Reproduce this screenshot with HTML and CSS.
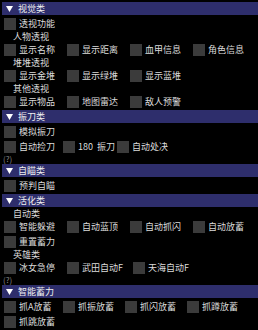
FILE: index.html
```html
<!DOCTYPE html>
<html lang="zh">
<head>
  <meta charset="UTF-8" />
  <meta name="viewport" content="width=device-width, initial-scale=1.0"/>
  <title>菜单</title>
  <link rel="stylesheet" href="styles.css">
</head>
<body>

  <div class="menu">
    <div class="hdr"><svg class="arrow" width="7" height="6" viewBox="0 0 7 6"><path d="M0 0H7L3.5 6Z" fill="#fff"/></svg>视觉类</div>
    <div class="row"><div class="item"><span class="box"></span>透视功能</div></div>
    <div class="sub">人物透视</div>
    <div class="row">
      <div class="item"><span class="box"></span>显示名称</div>
      <div class="item"><span class="box"></span>显示距离</div>
      <div class="item"><span class="box"></span>血甲信息</div>
      <div class="item"><span class="box"></span>角色信息</div>
    </div>
    <div class="sub">堆堆透视</div>
    <div class="row">
      <div class="item"><span class="box"></span>显示金堆</div>
      <div class="item"><span class="box"></span>显示绿堆</div>
      <div class="item"><span class="box"></span>显示蓝堆</div>
    </div>
    <div class="sub">其他透视</div>
    <div class="row">
      <div class="item"><span class="box"></span>显示物品</div>
      <div class="item"><span class="box"></span>地图雷达</div>
      <div class="item"><span class="box"></span>敌人预警</div>
    </div>

    <div class="hdr"><svg class="arrow" width="7" height="6" viewBox="0 0 7 6"><path d="M0 0H7L3.5 6Z" fill="#fff"/></svg>振刀类</div>
    <div class="row"><div class="item"><span class="box"></span>模拟振刀</div></div>
    <div class="row">
      <div class="item w59"><span class="box"></span>自动捡刀</div>
      <div class="item w54"><span class="box"></span>180&nbsp; 振刀</div>
      <div class="item"><span class="box"></span>自动处决</div>
    </div>
    <div class="help">(?)</div>

    <div class="hdr"><svg class="arrow" width="7" height="6" viewBox="0 0 7 6"><path d="M0 0H7L3.5 6Z" fill="#fff"/></svg>自瞄类</div>
    <div class="row"><div class="item"><span class="box"></span>预判自瞄</div></div>

    <div class="hdr"><svg class="arrow" width="7" height="6" viewBox="0 0 7 6"><path d="M0 0H7L3.5 6Z" fill="#fff"/></svg>活化类</div>
    <div class="sub">自动类</div>
    <div class="row">
      <div class="item"><span class="box"></span>智能躲避</div>
      <div class="item"><span class="box"></span>自动蓝顶</div>
      <div class="item"><span class="box"></span>自动抓闪</div>
      <div class="item"><span class="box"></span>自动放蓄</div>
    </div>
    <div class="row"><div class="item"><span class="box"></span>重置蓄力</div></div>
    <div class="sub">英雄类</div>
    <div class="row">
      <div class="item"><span class="box"></span>冰女急停</div>
      <div class="item w66"><span class="box"></span>武田自动F</div>
      <div class="item"><span class="box"></span>天海自动F</div>
    </div>
    <div class="help">(?)</div>

    <div class="hdr"><svg class="arrow" width="7" height="6" viewBox="0 0 7 6"><path d="M0 0H7L3.5 6Z" fill="#fff"/></svg>智能蓄力</div>
    <div class="row">
      <div class="item w59"><span class="box"></span>抓A放蓄</div>
      <div class="item w62"><span class="box"></span>抓振放蓄</div>
      <div class="item w62"><span class="box"></span>抓闪放蓄</div>
      <div class="item"><span class="box"></span>抓蹲放蓄</div>
    </div>
    <div class="row"><div class="item"><span class="box"></span>抓跳放蓄</div></div>
  </div>

</body>
</html>
```

FILE: styles.css
```css
body {
  margin: 0;
  background: #000;
  font-family: "Noto Sans CJK SC", "Noto Sans", sans-serif;
  font-size: 9px;
  color: #dcdcdc;
  overflow: hidden;
}

.menu {
  padding-top: 2px;
}

.hdr {
  height: 13px;
  margin: 0 0 2px 2px;
  padding-left: 4px;
  background: #2e2e6c;
  color: #f0f0f0;
  display: flex;
  align-items: center;
  line-height: 13px;
}

.arrow {
  margin-right: 5px;
}

.row {
  height: 13px;
  margin-bottom: 2px;
  padding-left: 4px;
  display: flex;
  align-items: center;
}

.item {
  width: 63px;
  flex: none;
  display: flex;
  align-items: center;
  white-space: nowrap;
  line-height: 13px;
}

.w54 { width: 54px; }
.w59 { width: 59px; }
.w62 { width: 62px; }
.w66 { width: 66px; }

.box {
  width: 12px;
  height: 12px;
  margin-right: 3px;
  background: #3b3b3b;
  flex: none;
}

.sub {
  height: 9px;
  line-height: 9px;
  margin-bottom: 2px;
  padding-left: 13px;
}

.help {
  height: 7px;
  line-height: 7px;
  margin-bottom: 2px;
  padding-left: 3px;
  color: #8a8a8a;
  font-size: 8px;
}
```
